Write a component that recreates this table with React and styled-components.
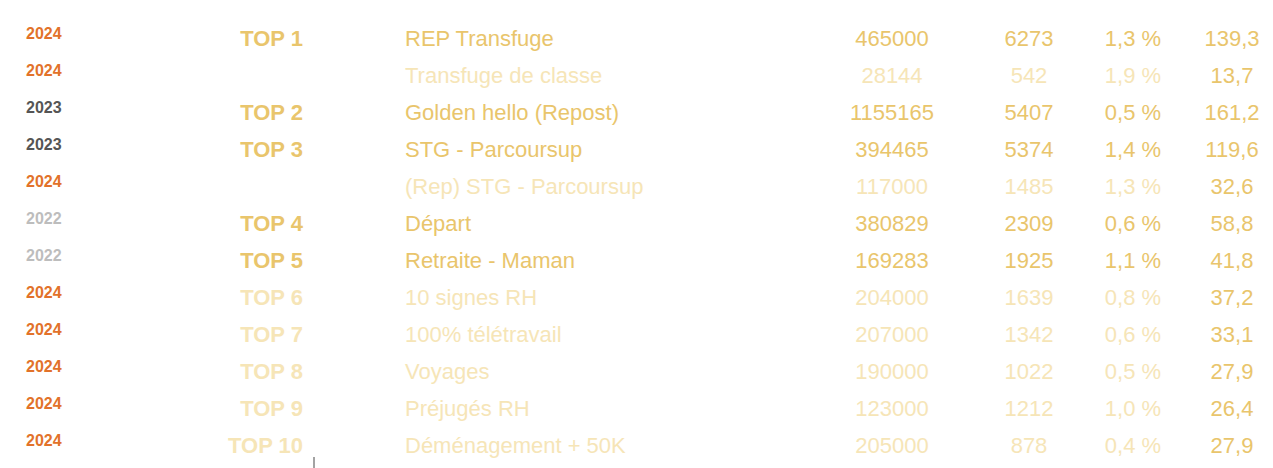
import React from "react";
import styled, { createGlobalStyle } from "styled-components";

const GOLD = "#E9C56C";
const GOLD_FADED = "#F6E5B7";
const YEAR_COLORS = { 2024: "#E2722A", 2023: "#555555", 2022: "#BDBDBD" };

const Global = createGlobalStyle`
  html, body { margin: 0; padding: 0; background: #ffffff; overflow: hidden; }
  body { font-family: "Liberation Sans", Arial, Helvetica, sans-serif; }
`;

const Table = styled.div`
  display: grid;
  grid-template-columns: 174px 103px 498px 182px 92px 116px 82px;
  grid-auto-rows: 37px;
  padding: 20px 0 0 26px;
  width: 1273px;
  box-sizing: border-box;
  font-size: 22px;
  line-height: 37px;
  white-space: nowrap;
`;

const Year = styled.div`
  align-self: start;
  font-size: 16px;
  font-weight: 700;
  line-height: 20px;
  padding-top: 4px;
  color: ${(p) => YEAR_COLORS[p.$year]};
`;

const Cell = styled.div`
  color: ${(p) => (p.$faded ? GOLD_FADED : GOLD)};
  text-align: ${(p) => p.$align || "left"};
`;

const Top = styled(Cell)`
  font-weight: 700;
  text-align: right;
`;

const Name = styled(Cell)`
  padding-left: 102px;
`;

const Footer = styled.div`
  display: flex;
  padding-left: 313px;
  margin-top: -7px;
`;

const Handle = styled.span`
  display: block;
  width: 2px;
  height: 11px;
  background: #a3a3a3;
`;

const rows = [
  { year: 2024, top: "TOP 1", name: "REP Transfuge", a: "465000", b: "6273", c: "1,3 %", d: "139,3", faded: false },
  { year: 2024, top: "", name: "Transfuge de classe", a: "28144", b: "542", c: "1,9 %", d: "13,7", faded: true },
  { year: 2023, top: "TOP 2", name: "Golden hello (Repost)", a: "1155165", b: "5407", c: "0,5 %", d: "161,2", faded: false },
  { year: 2023, top: "TOP 3", name: "STG - Parcoursup", a: "394465", b: "5374", c: "1,4 %", d: "119,6", faded: false },
  { year: 2024, top: "", name: "(Rep) STG - Parcoursup", a: "117000", b: "1485", c: "1,3 %", d: "32,6", faded: true },
  { year: 2022, top: "TOP 4", name: "Départ", a: "380829", b: "2309", c: "0,6 %", d: "58,8", faded: false },
  { year: 2022, top: "TOP 5", name: "Retraite - Maman", a: "169283", b: "1925", c: "1,1 %", d: "41,8", faded: false },
  { year: 2024, top: "TOP 6", name: "10 signes RH", a: "204000", b: "1639", c: "0,8 %", d: "37,2", faded: true },
  { year: 2024, top: "TOP 7", name: "100% télétravail", a: "207000", b: "1342", c: "0,6 %", d: "33,1", faded: true },
  { year: 2024, top: "TOP 8", name: "Voyages", a: "190000", b: "1022", c: "0,5 %", d: "27,9", faded: true },
  { year: 2024, top: "TOP 9", name: "Préjugés RH", a: "123000", b: "1212", c: "1,0 %", d: "26,4", faded: true },
  { year: 2024, top: "TOP 10", name: "Déménagement + 50K", a: "205000", b: "878", c: "0,4 %", d: "27,9", faded: true },
];

export default function App() {
  return (
    <>
      <Global />
      <Table>
        {rows.map((r, i) => (
          <React.Fragment key={i}>
            <Year $year={r.year}>{r.year}</Year>
            <Top $faded={r.faded}>{r.top}</Top>
            <Name $faded={r.faded}>{r.name}</Name>
            <Cell $faded={r.faded} $align="center">{r.a}</Cell>
            <Cell $faded={r.faded} $align="center">{r.b}</Cell>
            <Cell $faded={r.faded} $align="center">{r.c}</Cell>
            <Cell $align="center">{r.d}</Cell>
          </React.Fragment>
        ))}
      </Table>
      <Footer>
        <Handle />
      </Footer>
    </>
  );
}
